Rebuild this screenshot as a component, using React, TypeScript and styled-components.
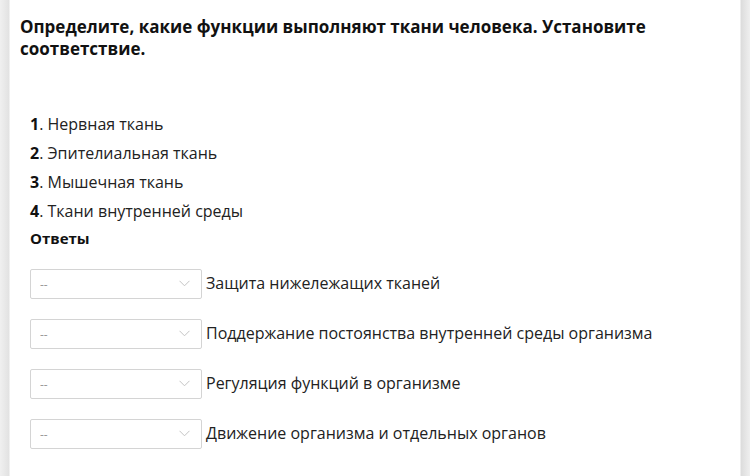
import React from "react";
import styled, { createGlobalStyle } from "styled-components";

const Global = createGlobalStyle`
  html, body { margin: 0; padding: 0; background: #fff; }
  body { font-family: "Open Sans", "Liberation Sans", sans-serif; color: #111; }
`;

const Page = styled.div`
  display: flex;
  width: 750px;
  height: 476px;
  overflow: hidden;
  background: linear-gradient(to right, #f0f0f0 0px, #e2e2e2 9px, #fff 10px, #fff 740px, #dcdcdc 741px, #efefef 750px);
`;

const Card = styled.div`
  margin-left: 10px;
  width: 730px;
  background: #fff;
  padding: 16px 10px 0 10px;
  box-sizing: border-box;
`;

const Title = styled.h1`
  margin: 0;
  font-size: 17px;
  line-height: 22px;
  font-weight: 700;
  color: #111;
`;

const List = styled.ol`
  list-style: none;
  margin: 50px 0 0 0;
  padding: 0 0 0 10px;
`;

const Item = styled.li`
  font-size: 16px;
  line-height: 29px;
  color: #222;
  b { font-weight: 700; color: #111; }
`;

const AnswersLabel = styled.div`
  padding-left: 10px;
  font-size: 15px;
  line-height: 22px;
  font-weight: 700;
  color: #111;
  margin-top: 1px;
`;

const Rows = styled.div`
  display: flex;
  flex-direction: column;
  gap: 20px;
  padding-left: 10px;
  margin-top: 20px;
`;

const Row = styled.div`
  display: flex;
  align-items: center;
  gap: 4px;
  height: 30px;
`;

const Select = styled.div`
  position: relative;
  width: 172px;
  height: 30px;
  box-sizing: border-box;
  border: 1px solid #d4d4d4;
  border-radius: 2px;
  background: #fff;
  display: flex;
  align-items: center;
  padding-left: 9px;
  font-size: 12px;
  color: #999;
`;

const Chevron = styled.svg`
  position: absolute;
  right: 11px;
  top: 10px;
`;

const Label = styled.span`
  font-size: 16px;
  color: #222;
  line-height: 20px;
  margin-top: -3px;
`;

const items = [
  "Нервная ткань",
  "Эпителиальная ткань",
  "Мышечная ткань",
  "Ткани внутренней среды",
];

const answers = [
  "Защита нижележащих тканей",
  "Поддержание постоянства внутренней среды организма",
  "Регуляция функций в организме",
  "Движение организма и отдельных органов",
];

export default function App() {
  return (
    <>
      <Global />
      <Page>
        <Card>
          <Title>
            Определите, какие функции выполняют ткани человека. Установите
            соответствие.
          </Title>
          <List>
            {items.map((t, i) => (
              <Item key={i}>
                <b>{i + 1}</b>. {t}
              </Item>
            ))}
          </List>
          <AnswersLabel>Ответы</AnswersLabel>
          <Rows>
            {answers.map((a, i) => (
              <Row key={i}>
                <Select>
                  --
                  <Chevron width="11" height="7" viewBox="0 0 11 7">
                    <path d="M0.5 0.8 L5.5 5.8 L10.5 0.8" fill="none" stroke="#c4c4c4" strokeWidth="1" />
                  </Chevron>
                </Select>
                <Label>{a}</Label>
              </Row>
            ))}
          </Rows>
        </Card>
      </Page>
    </>
  );
}
